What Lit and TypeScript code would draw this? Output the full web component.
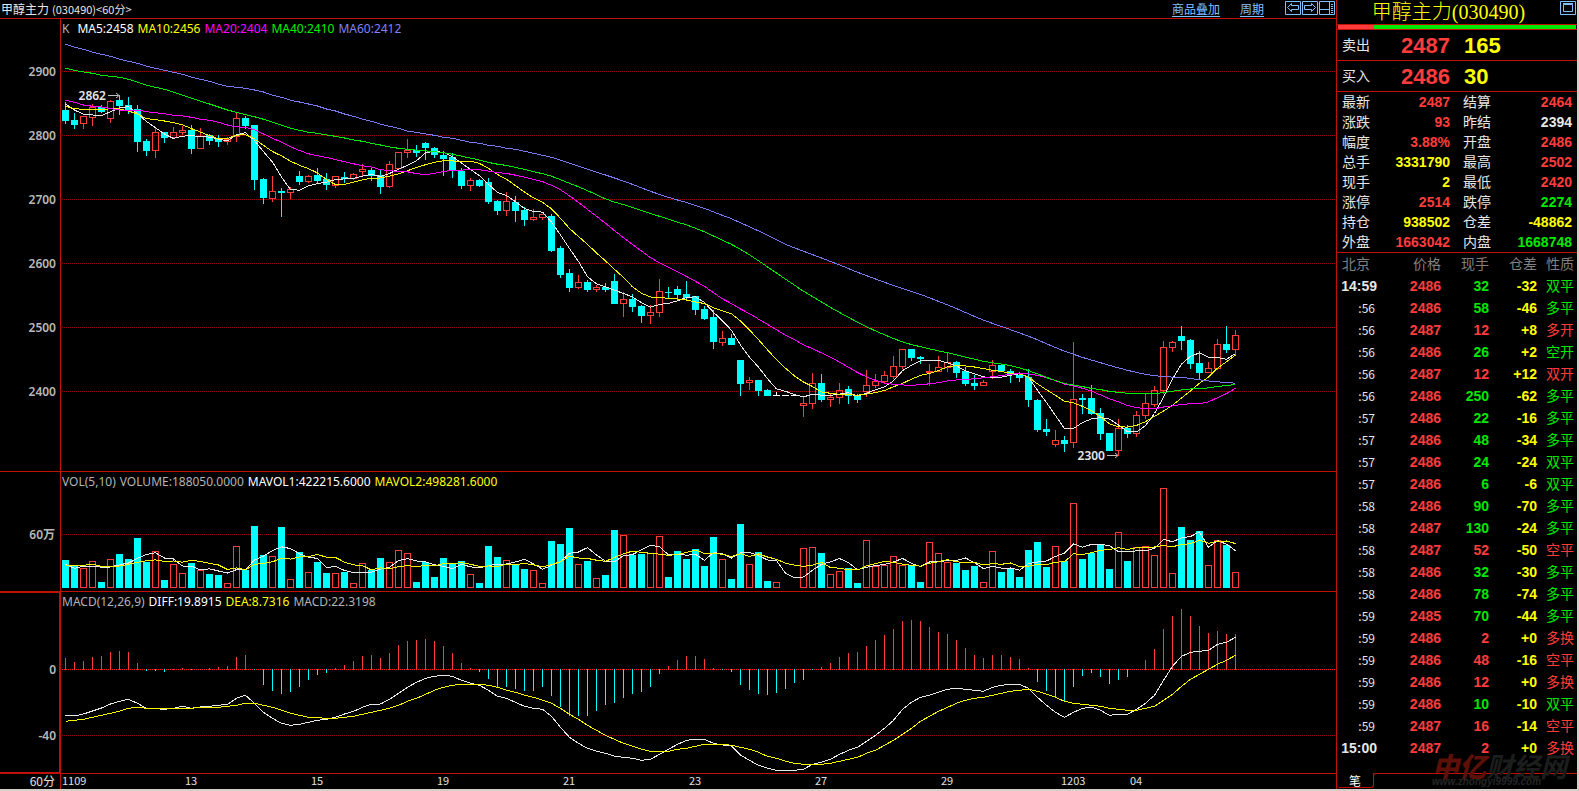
import { LitElement, html, svg, css } from "lit";
import { customElement } from "lit/decorators.js";
import { classMap } from "lit/directives/class-map.js";

/* Bars sit on a fixed pitch; each body is seven pixels wide with its wick in the middle. */
const PITCH = 9;
const BODY = 7;
const FIRST = 1;
/* Levels are stored in thirds of a pixel, counted from a block's own base row. */
const UNIT = 3;

const PRICE_TOP = 37;
const VOLUME_SHIFT = 25;
const MACD_SHIFT = 145;

type Kind = "u" | "d" | "w";
type Candle = { kind: Kind; top: number; bottom: number; high: number; low: number };

/* kind bodyTop bodyBottom high low */
const BLOCKS: { base: number; rows: string }[] = [
  {
    base: 0,
    rows: `d330,363,306,372 d360,374,339,387 u348,372,348,387 u321,353,312,378 d321,336,315,339
u303,357,300,369 d300,318,285,345 d315,330,291,342 d327,426,315,456 d423,453,417,468
u396,453,384,474 d396,414,396,430 u396,414,381,417 u390,399,378,405 d390,447,375,462
u408,447,384,447 d405,423,402,435 d417,426,405,441 u417,426,411,435 u354,411,339,426
d354,378,348,387 d375,540,375,570 d537,594,534,612 u573,597,528,606 d573,579,564,651
u567,579,561,597 d528,546,513,555 u528,546,525,549 d525,543,504,552 d537,555,519,570
u528,558,528,564 d531,537,516,549 u522,537,519,540 u507,516,492,528 d510,528,501,543
d525,561,507,582 u492,561,483,564 u456,507,456,507 u450,459,417,474 d450,459,435,471
d429,444,426,480`,
  },
  {
    base: 110,
    rows: `d114,135,111,144 d135,147,123,198 d141,180,129,204 d183,228,174,237 u210,228,204,243
d210,228,207,231 d216,276,204,282 d273,303,270,315 u273,303,246,318 d276,303,258,336
d300,330,291,348 u321,330,297,333 u312,324,312,330 d318,423,312,426 d414,495,408,504
d489,534,477,546 u516,534,495,537 d516,540,510,546 u531,540,525,546 d531,540,519,546
d513,582,492,582 u567,582,546,621 d567,591,552,606 d588,618,585,639 u606,618,585,642
u543,609,507,621 d546,549,531,564 d537,555,528,573 d552,564,513,570 d558,600,558,615
d597,627,588,630 d621,696,600,717 u684,699,663,708 d684,705,672,705`,
  },
  {
    base: 280,
    rows: `d240,312,240,348 u300,309,291,330 d300,333,300,348 d330,348,327,348 w345,348,336,348
w345,348,345,348 w345,348,345,348 u369,378,351,411 u309,372,279,387 d309,360,282,366
u351,360,339,381 u330,354,309,372 d327,348,318,372 d348,360,342,369 u315,336,270,351
u303,318,282,324 u285,306,273,309 u258,291,228,297 u207,261,207,267 d207,234,207,243
d231,237,228,252 u273,279,252,318 u261,276,228,276 u246,264,219,276 d246,279,243,294
d273,312,261,318 d309,318,285,330 u306,318,300,318 u255,276,240,297 d255,273,255,276
d273,285,267,309 d285,294,276,306 d291,360,267,381 d360,450,357,456 d447,456,417,468`,
  },
  {
    base: 310,
    rows: `u390,405,360,411 d390,402,378,426 u267,399,96,414 d264,270,252,312 d264,312,225,315
d309,372,294,390 d369,423,369,423 u354,423,327,438 d354,372,345,384 u315,372,303,381
u279,318,252,327 u240,285,228,291 u111,243,93,252 u96,114,93,126 d78,93,48,120
d90,162,87,177 d159,189,123,207 u174,189,156,189 u102,177,87,180 d102,120,48,129
u75,120,60,138`,
  },
];

const CANDLES: Candle[] = BLOCKS.flatMap(({ base, rows }) =>
  rows.split(/\s+/).map((row) => {
    const [top, bottom, high, low] = row
      .slice(1)
      .split(",")
      .map((n) => Math.round(Number(n) / UNIT) + base - PRICE_TOP);
    return { kind: row[0] as Kind, top, bottom, high, low };
  }),
);

const VOLUME = [
  285, 300, 309, 288, 351, 282, 267, 282, 219, 291, 258, 345, 297, 324, 294, 315, 327, 330, 354, 243,
  315, 183, 270, 273, 186, 342, 261, 321, 291, 324, 324, 321, 354, 294, 315, 279, 291, 255, 264, 351,
  291, 336, 279, 297, 288, 327, 354, 243, 276, 285, 297, 312, 315, 354, 228, 237, 189, 297, 288, 339,
  330, 195, 210, 270, 267, 264, 213, 336, 258, 282, 252, 303, 216, 282, 342, 177, 297, 261, 348, 351,
  366, 366, 249, 246, 264, 327, 318, 309, 354, 225, 303, 300, 273, 300, 300, 351, 231, 264, 291, 294,
  315, 303, 351, 258, 321, 312, 336, 255, 231, 306, 243, 288, 114, 282, 264, 240, 312, 201, 288, 246,
  243, 270, 69, 324, 186, 225, 198, 300, 225, 240, 321,
];

const HIST = [
  579, 591, 588, 576, 573, 561, 558, 561, 594, 618, 618, 621, 612, 609, 615, 612, 609, 606, 603, 576,
  570, 615, 660, 678, 687, 681, 666, 645, 630, 624, 609, 600, 588, 573, 570, 579, 564, 540, 528, 525,
  522, 528, 543, 564, 594, 609, 621, 642, 666, 666, 672, 678, 678, 666, 693, 726, 753, 753, 753, 738,
  720, 714, 699, 687, 681, 666, 627, 603, 585, 573, 573, 582, 609, 615, 621, 660, 675, 687, 690, 684,
  672, 654, 645, 615, 606, 594, 576, 564, 561, 543, 525, 510, 492, 468, 465, 468, 486, 501, 507, 525,
  549, 570, 579, 570, 570, 576, 582, 609, 651, 678, 699, 708, 666, 633, 624, 636, 657, 645, 636, 612,
  585, 552, 492, 453, 432, 453, 483, 504, 498, 507, 507,
];

const DIFF = [
  751, 753, 747, 738, 729, 717, 709, 703, 715, 730, 731, 733, 730, 724, 730, 726, 724, 721, 718, 700,
  691, 715, 742, 760, 775, 781, 778, 772, 766, 763, 757, 747, 739, 727, 718, 717, 703, 685, 667, 652,
  640, 634, 631, 634, 646, 655, 661, 676, 694, 700, 712, 724, 730, 733, 754, 787, 817, 835, 850, 859,
  865, 874, 877, 880, 886, 883, 868, 853, 838, 826, 823, 823, 835, 840, 843, 870, 886, 901, 910, 916,
  916, 916, 913, 898, 892, 883, 868, 856, 847, 829, 811, 790, 766, 733, 712, 697, 691, 682, 673, 670,
  673, 676, 679, 667, 661, 658, 658, 670, 697, 721, 742, 757, 742, 730, 727, 736, 751, 748, 748, 733,
  715, 691, 646, 604, 574, 562, 559, 556, 538, 532, 517,
];

const DEA = [
  769, 766, 763, 757, 751, 745, 739, 730, 727, 730, 730, 730, 730, 730, 730, 727, 727, 727, 724, 721,
  715, 715, 721, 727, 736, 745, 751, 757, 758, 760, 760, 757, 754, 748, 742, 736, 730, 721, 709, 700,
  688, 676, 667, 661, 658, 658, 658, 661, 667, 676, 682, 691, 697, 706, 715, 730, 748, 763, 781, 796,
  811, 823, 835, 844, 853, 859, 859, 859, 853, 850, 844, 838, 838, 838, 841, 847, 853, 862, 874, 880,
  889, 895, 898, 898, 898, 895, 889, 883, 877, 865, 856, 841, 826, 808, 790, 769, 754, 739, 727, 715,
  706, 700, 697, 691, 685, 679, 676, 673, 679, 688, 697, 709, 715, 718, 721, 724, 730, 733, 736, 736,
  730, 724, 706, 688, 664, 643, 628, 613, 598, 586, 571,
];

/* Averages need a full window; the opening stretch of each line comes from older sessions. */
const MA_LEAD: Record<number, number[]> = {
  5: [312, 330, 343, 345],
  10: [319, 326, 328, 329, 330, 326, 327, 333, 342],
  20: [301, 307, 315, 319, 321, 326, 330, 331, 330, 335, 338, 341, 346, 348, 352, 358, 361, 367, 375],
  40: [
    205, 211, 216, 220, 226, 229, 232, 238, 247, 256, 262, 268, 277, 286, 295, 304, 312, 321, 330, 337,
    344, 350, 358, 367, 376, 385, 391, 397, 400, 405, 409, 414, 420, 424, 430, 435, 441, 445, 448,
  ],
  60: [
    132, 142, 148, 157, 163, 169, 178, 184, 190, 199, 205, 211, 217, 223, 232, 238, 244, 253, 259, 262,
    265, 270, 276, 286, 292, 301, 306, 312, 318, 327, 333, 342, 349, 358, 364, 373, 379, 385, 394, 397,
    402, 406, 412, 415, 421, 427, 430, 436, 439, 445, 448, 454, 460, 466, 472, 481, 490, 499, 508,
  ],
};

const VOL_LEAD: Record<number, number[]> = {
  5: [298, 310, 304, 304],
  10: [301, 301, 301, 298, 304, 304, 303, 298, 292],
};

const average = (values: number[], span: number, lead: number[]) =>
  values.map((_, i) =>
    i < span - 1 ? lead[i] : values.slice(i - span + 1, i + 1).reduce((a, b) => a + b, 0) / span,
  );

const points = (levels: number[]) =>
  levels.map((y, i) => `${FIRST + 3.5 + i * PITCH},${y.toFixed(1)}`).join(" ");

const CLOSES = CANDLES.map((c) => (c.kind === "u" ? c.top : c.bottom) - 0.5);
const priceAverage = (span: number) =>
  points(average(CLOSES, span, MA_LEAD[span].map((n) => n / UNIT - PRICE_TOP)));
const volumeAverage = (span: number) =>
  points(average(VOLUME, span, VOL_LEAD[span]).map((n) => n / UNIT - VOLUME_SHIFT));

type Legend = [string, string][];

const PRICE_LEGEND: Legend = [
  ["K", "grey key"], ["MA5:2458", "white"], ["MA10:2456", "yellow"],
  ["MA20:2404", "magenta"], ["MA40:2410", "green"], ["MA60:2412", "violet"],
];
const VOLUME_LEGEND: Legend = [
  ["VOL(5,10)", "grey"], ["VOLUME:188050.0000", "grey"],
  ["MAVOL1:422215.6000", "white"], ["MAVOL2:498281.6000", "yellow"],
];
const MACD_LEGEND: Legend = [
  ["MACD(12,26,9)", "grey"], ["DIFF:19.8915", "white"], ["DEA:8.7316", "yellow"], ["MACD:22.3198", "grey"],
];

const PRICE_TICKS: [string, number][] = [["2900", 71], ["2800", 135], ["2700", 199], ["2600", 263], ["2500", 327], ["2400", 391]];
const DATES: [string, number][] = [
  ["1109", 1], ["13", 124], ["15", 250], ["19", 376], ["21", 502],
  ["23", 628], ["27", 754], ["29", 880], ["1203", 1000], ["04", 1069],
];

@customElement("market-chart")
export class MarketChart extends LitElement {
  static styles = css`
    :host { display: flex; flex-direction: column; min-width: 0; overflow: hidden; font-family: "Noto Sans CJK SC", sans-serif; }
    .head { display: flex; height: 18px; line-height: 17px; font-size: 12px; color: #e6e6e6; border-bottom: 1px solid #c01008; }
    .name { margin: 0; font-size: 12px; font-weight: 400; padding-left: 1px; flex: 1; white-space: nowrap; }
    .code { font-size: 11px; margin-left: 3px; }
    .links { display: flex; gap: 20px; margin-right: 21px; }
    .links a { color: #80c0ff; text-underline-offset: 2px; }
    .tools { display: flex; gap: 1px; padding: 1px 1px 0 0; }
    .tools button { width: 16px; height: 14px; padding: 0; border: 0; background: none; display: block; cursor: pointer; }
    .tools svg { display: block; }
    .pane { display: grid; grid-template-columns: 60px 1fr; border-bottom: 1px solid #c01008; }
    .price { height: 452px; }
    .volume { height: 119px; }
    .macd { flex: 1; min-height: 181px; }
    .dates { height: 15px; border-bottom: 0; }
    .active { border: 1px solid #c01008; border-left: 0; }
    .active svg { margin-top: -1px; }
    .plot { border-left: 1px solid #c01008; display: flex; flex-direction: column; min-width: 0; }
    .legend { display: flex; gap: 4px; height: 18px; padding-left: 1px; font: 12px/19px "Noto Sans", sans-serif; white-space: nowrap; }
    .key { margin-right: 4px; }
    .axis svg, .plot svg { display: block; width: 100%; flex: 1; height: 100%; min-height: 0; overflow: visible; }
    .grey { color: #b4b4b4; }
    .white { color: #fff; }
    .yellow { color: #ff0; }
    .magenta { color: #f0f; }
    .green { color: #00f000; }
    .violet { color: #8080f8; }
    .tick { font: 600 12px "Noto Sans", "Noto Sans CJK SC", sans-serif; fill: #b8b8b8; text-anchor: end; }
    .mark { font: 600 12px "Noto Sans", sans-serif; fill: #e6e6e6; text-anchor: end; }
    .date { font: 11px "Noto Sans CJK SC", sans-serif; fill: #e0e0e0; }
    .period { font-size: 12px; line-height: 14px; color: #e0e0e0; text-align: right; padding-right: 5px; }
    .grid { stroke: #a00000; stroke-dasharray: 1 1; }
    .zero { stroke: #ff2020; stroke-dasharray: 1 1; }
    .u { fill: none; stroke: #ff3c3c; }
    .uf { fill: #ff3c3c; }
    .d { fill: #0ff; }
    .w { fill: #fff; }
    .line { fill: none; stroke-width: 1; shape-rendering: crispEdges; }
    .l5 { stroke: #e8e8e8; }
    .l10 { stroke: #f4f400; }
    .l20 { stroke: #f0f; }
    .l40 { stroke: #00e800; }
    .l60 { stroke: #7878f0; }
    .arrow { fill: none; stroke: #c0c0c0; }
    .tool { fill: none; stroke: #80c0ff; stroke-width: 1; }
  `;

  private legend(items: Legend) {
    return html`<div class="legend">${items.map(([text, tone]) => html`<span class=${tone}>${text}</span>`)}</div>`;
  }

  private gridLine(y: number, name = "grid") {
    return svg`<line class=${name} x1="1" x2="100%" y1=${y + 0.5} y2=${y + 0.5}></line>`;
  }

  private candle(c: Candle, i: number) {
    const x = FIRST + i * PITCH;
    const fill = c.kind === "u" ? "uf" : c.kind;
    if (c.kind !== "u") {
      return svg`<rect class=${fill} x=${x + 3} y=${c.high} width="1" height=${c.low - c.high}></rect>
        <rect class=${fill} x=${x} y=${c.top} width=${BODY} height=${c.bottom - c.top}></rect>`;
    }
    return svg`<rect class=${fill} x=${x + 3} y=${c.high} width="1" height=${Math.max(0, c.top - c.high)}></rect>
      <rect class=${fill} x=${x + 3} y=${c.bottom} width="1" height=${Math.max(0, c.low - c.bottom)}></rect>
      <rect class="u" x=${x + 0.5} y=${c.top + 0.5} width=${BODY - 1} height=${c.bottom - c.top - 1}></rect>`;
  }

  private volumeBar(level: number, i: number) {
    const x = FIRST + i * PITCH;
    const top = Math.round(level / UNIT) - VOLUME_SHIFT;
    const bottom = 98;
    return CANDLES[i].kind === "d"
      ? svg`<rect class="d" x=${x} y=${top} width=${BODY} height=${bottom - top}></rect>`
      : svg`<rect class="u" x=${x + 0.5} y=${top + 0.5} width=${BODY - 1} height=${bottom - top - 1}></rect>`;
  }

  private histBar(level: number, i: number) {
    const zero = 59;
    const end = Math.round(level / UNIT) - MACD_SHIFT;
    const x = FIRST + 3 + i * PITCH;
    return end <= zero
      ? svg`<rect class="uf" x=${x} y=${end} width="1" height=${zero + 1 - end}></rect>`
      : svg`<rect class="d" x=${x} y=${zero} width="1" height=${end - zero}></rect>`;
  }

  render() {
    return html`
      <header class="head">
        <h1 class="name">甲醇主力<span class="code">(030490)&lt;60分&gt;</span></h1>
        <nav class="links"><a href="#overlay">商品叠加</a><a href="#period">周期</a></nav>
        <div class="tools">
          <button type="button" aria-label="Previous">
            <svg width="16" height="14"><path class="tool" d="M.5 .5h15v13H.5zM2.5 6.5l4-4v2h7v4h-7v2z"></path></svg>
          </button>
          <button type="button" aria-label="Next">
            <svg width="16" height="14"><path class="tool" d="M.5 .5h15v13H.5zM13.5 6.5l-4-4v2h-7v4h7v2z"></path></svg>
          </button>
          <button type="button" aria-label="Panels">
            <svg width="16" height="14"><path class="tool" d="M.5 .5h15v13H.5zM10.5 .5v13M.5 8.5h10M12 3.5h2M12 5.5h2M12 7.5h2M12 9.5h2M12 11.5h2"></path></svg>
          </button>
        </div>
      </header>

      <section class="pane price">
        <div class="axis">
          <svg>${PRICE_TICKS.map(([t, y]) => svg`<text class="tick" x="56" y=${y - 14}>${t}</text>`)}</svg>
        </div>
        <div class="plot">
          ${this.legend(PRICE_LEGEND)}
          <svg>
            ${PRICE_TICKS.map(([, y]) => this.gridLine(y - PRICE_TOP))}
            ${CANDLES.map((c, i) => this.candle(c, i))}
            ${[5, 10, 20, 40, 60].map((n) => svg`<polyline class="line l${n}" points=${priceAverage(n)}></polyline>`)}
            <text class="mark" x="45" y="63">2862</text>
            <path class="arrow" d="M47 58.5h10M55 56l3 2.5l-3 2.5"></path>
            <text class="mark" x="1044" y="423">2300</text>
            <path class="arrow" d="M1046 418.5h10M1054 416l3 2.5l-3 2.5"></path>
          </svg>
        </div>
      </section>

      <section class="pane volume">
        <div class="axis"><svg><text class="tick" x="55" y="67">60万</text></svg></div>
        <div class="plot">
          ${this.legend(VOLUME_LEGEND)}
          <svg>
            ${this.gridLine(44)}
            ${VOLUME.map((v, i) => this.volumeBar(v, i))}
            <polyline class="line l5" points=${volumeAverage(5)}></polyline>
            <polyline class="line l10" points=${volumeAverage(10)}></polyline>
          </svg>
        </div>
      </section>

      <section class="pane macd">
        <div class="axis active">
          <svg>
            <text class="tick" x="56" y="82">0</text>
            <text class="tick" x="56" y="148">-40</text>
          </svg>
        </div>
        <div class="plot">
          ${this.legend(MACD_LEGEND)}
          <svg>
            ${this.gridLine(59, "zero")}
            ${this.gridLine(125)}
            ${HIST.map((v, i) => this.histBar(v, i))}
            <polyline class="line l5" points=${points(DIFF.map((n) => n / UNIT - MACD_SHIFT))}></polyline>
            <polyline class="line l10" points=${points(DEA.map((n) => n / UNIT - MACD_SHIFT))}></polyline>
          </svg>
        </div>
      </section>

      <section class="pane dates">
        <div class="period">60分</div>
        <div class="plot"><svg>${DATES.map(([t, x]) => svg`<text class="date" x=${x} y="11">${t}</text>`)}</svg></div>
      </section>
    `;
  }
}

type Tone = "r" | "g" | "y" | "n";
const QUOTES: [string, string, Tone][] = [
  ["最新", "2487", "r"], ["结算", "2464", "r"],
  ["涨跌", "93", "r"], ["昨结", "2394", "n"],
  ["幅度", "3.88%", "r"], ["开盘", "2486", "r"],
  ["总手", "3331790", "y"], ["最高", "2502", "r"],
  ["现手", "2", "y"], ["最低", "2420", "r"],
  ["涨停", "2514", "r"], ["跌停", "2274", "g"],
  ["持仓", "938502", "y"], ["仓差", "-48862", "y"],
  ["外盘", "1663042", "r"], ["内盘", "1668748", "g"],
];

/* time, price, lots, open-interest change, nature, tone of the trade */
const TRADES: [string, string, string, string, string, Tone][] = [
  ["14:59", "2486", "32", "-32", "双平", "g"],
  [":56", "2486", "58", "-46", "多平", "g"],
  [":56", "2487", "12", "+8", "多开", "r"],
  [":56", "2486", "26", "+2", "空开", "g"],
  [":56", "2487", "12", "+12", "双开", "r"],
  [":56", "2486", "250", "-62", "多平", "g"],
  [":57", "2486", "22", "-16", "多平", "g"],
  [":57", "2486", "48", "-34", "多平", "g"],
  [":57", "2486", "24", "-24", "双平", "g"],
  [":57", "2486", "6", "-6", "双平", "g"],
  [":58", "2486", "90", "-70", "多平", "g"],
  [":58", "2487", "130", "-24", "多平", "g"],
  [":58", "2487", "52", "-50", "空平", "r"],
  [":58", "2486", "32", "-30", "多平", "g"],
  [":58", "2486", "78", "-74", "多平", "g"],
  [":59", "2485", "70", "-44", "多平", "g"],
  [":59", "2486", "2", "+0", "多换", "r"],
  [":59", "2486", "48", "-16", "空平", "r"],
  [":59", "2486", "12", "+0", "多换", "r"],
  [":59", "2486", "10", "-10", "双平", "g"],
  [":59", "2487", "16", "-14", "空平", "r"],
  ["15:00", "2487", "2", "+0", "多换", "r"],
];

@customElement("quote-panel")
export class QuotePanel extends LitElement {
  static styles = css`
    :host { position: relative; display: flex; flex-direction: column; border-left: 1px solid #c01008; color: #e6e6e6; font: 14px/20px "Liberation Sans", "Noto Sans CJK SC", sans-serif; }
    .title { display: flex; justify-content: flex-end; height: 24px; padding: 0 1px 0 0; border-bottom: 1px solid #c01008; }
    .name { margin: 0 auto; font: 300 20px/24px "Liberation Serif", "Noto Sans CJK SC", serif; color: #ff0; white-space: nowrap; }
    .expand { width: 16px; height: 14px; margin-top: 1px; padding: 0; border: 0; background: none; cursor: pointer; }
    .expand svg { display: block; }
    .box { fill: none; stroke: #80c0ff; }
    .ratio { display: flex; height: 4px; margin: 0 1px; }
    .sell { width: 15%; background: #ff3c3c; }
    .buy { flex: 1; background: #00e800; }
    .side { display: grid; grid-template-columns: 40px 68px 1fr; height: 30px; line-height: 30px; padding: 0 5px; border-bottom: 1px solid #c01008; }
    .side:first-of-type { border-top: 1px solid #c01008; }
    .big { font: 700 22px/31px "Liberation Sans", sans-serif; text-align: right; }
    .lots { text-align: left; padding-left: 14px; }
    .quotes { display: grid; grid-template-columns: 40px 68px 53px 1fr; grid-auto-rows: 20px; margin: 0; padding: 0 5px; border-bottom: 1px solid #c01008; }
    .quotes dt:nth-of-type(even) { padding-left: 13px; }
    .quotes dd { margin: 0; text-align: right; font-weight: 700; }
    .r { color: #ff3c3c; }
    .g { color: #00e800; }
    .y { color: #ff0; }
    .n { color: #e6e6e6; }
    .trades { width: 100%; border-collapse: collapse; table-layout: fixed; line-height: 22px; }
    .trades th, .trades td { box-sizing: border-box; height: 22px; padding: 0; text-align: right; font-weight: 700; }
    .trades th { color: #808080; font-weight: 400; }
    .trades th.time { padding-left: 5px; text-align: left; }
    .time { width: 40px; }
    .price { width: 64px; }
    .mid { width: 48px; }
    .trades .kind { padding-right: 3px; font-weight: 400; }
    .trades .short { font: 12px/22px "Noto Sans CJK SC", sans-serif; padding-right: 2px; }
    .tabs { display: flex; height: 16px; margin-top: auto; }
    .tab { width: 37px; height: 15px; padding: 0; border: solid #c01008; border-width: 0 1px 1px 0; border-radius: 0 0 3px 3px; background: none; color: #fff; font: 12px/13px "Noto Sans CJK SC", sans-serif; cursor: pointer; }
    .rest { flex: 1; border-top: 1px solid #c01008; border-left: 1px solid #c01008; border-top-left-radius: 3px; margin-left: -1px; height: 3px; }
    .water { position: absolute; right: 10px; bottom: 3px; font: italic 700 27px/20px "Liberation Sans", "Noto Sans CJK SC", sans-serif; color: #1c1e1e; white-space: nowrap; pointer-events: none; }
    .water b { color: #5c1008; }
    .site { display: block; font: italic 700 10px/8px "Liberation Sans", sans-serif; color: #242626; }
  `;

  render() {
    return html`
      <header class="title">
        <h2 class="name">甲醇主力(030490)</h2>
        <button class="expand" type="button" aria-label="Expand">
          <svg width="16" height="14"><path class="box" d="M.5 .5h15v13H.5zM3.5 3.5h9v7h-9zM3 2.5h10"></path></svg>
        </button>
      </header>
      <div class="ratio"><span class="sell"></span><span class="buy"></span></div>
      <section class="side"><span>卖出</span><span class="big r">2487</span><span class="big lots y">165</span></section>
      <section class="side"><span>买入</span><span class="big r">2486</span><span class="big lots y">30</span></section>
      <dl class="quotes">${QUOTES.map(([label, value, tone]) => html`<dt>${label}</dt><dd class=${tone}>${value}</dd>`)}</dl>
      <table class="trades">
        <thead>
          <tr><th class="time">北京</th><th class="price">价格</th><th class="mid">现手</th><th class="mid">仓差</th><th class="kind">性质</th></tr>
        </thead>
        <tbody>
          ${TRADES.map(
            ([time, price, lots, change, kind, tone]) => html`<tr>
              <td class=${classMap({ time: true, short: time.startsWith(":") })}>${time}</td>
              <td class="r">${price}</td>
              <td class=${tone}>${lots}</td>
              <td class="y">${change}</td>
              <td class="kind ${tone}">${kind}</td>
            </tr>`,
          )}
        </tbody>
      </table>
      <div class="tabs"><button class="tab" type="button">笔</button><span class="rest"></span></div>
      <div class="water"><b>中亿</b>财经网<span class="site">www.zhongyi9999.com</span></div>
    `;
  }
}

@customElement("app-root")
export class AppRoot extends LitElement {
  static styles = css`
    :host { display: grid; grid-template-columns: 1fr 241px; min-height: 100vh; box-sizing: border-box; background: #000; border: solid #d4d0c8; border-width: 0 2px 2px 0; }
  `;

  render() {
    return html`<market-chart></market-chart><quote-panel></quote-panel>`;
  }
}
